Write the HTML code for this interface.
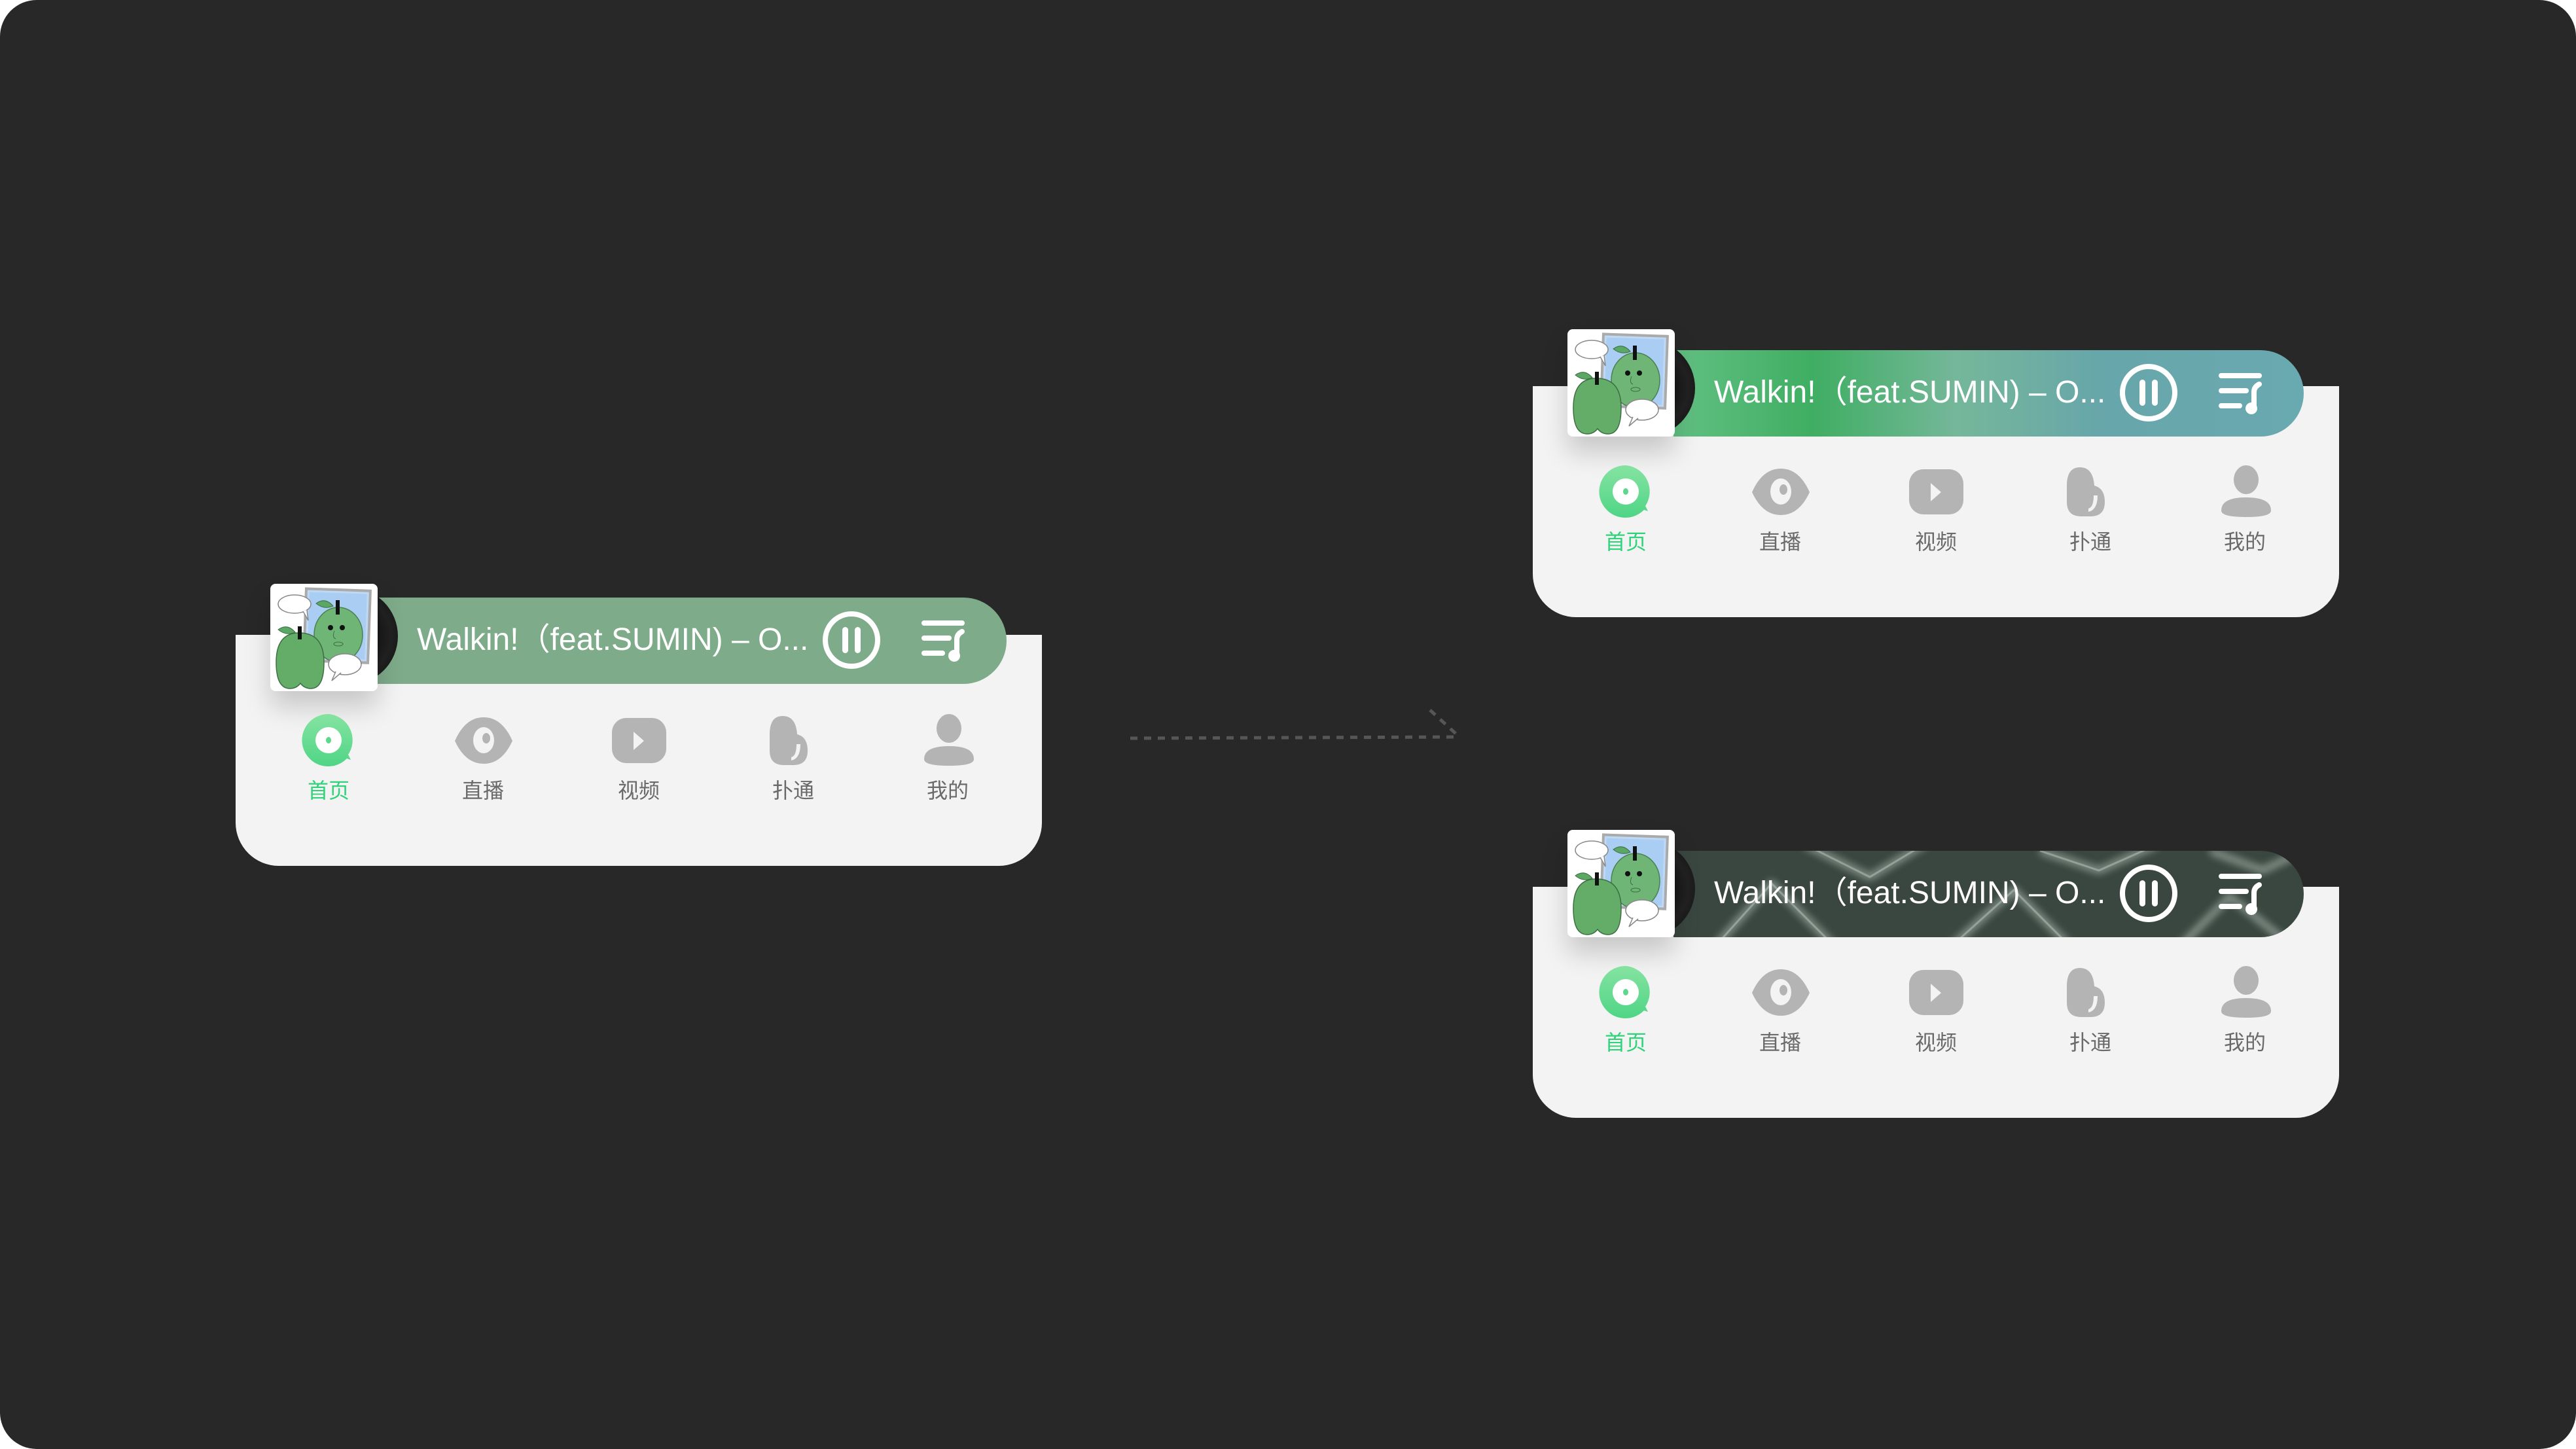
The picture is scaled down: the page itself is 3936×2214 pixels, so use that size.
<!DOCTYPE html>
<html><head><meta charset="utf-8"><style>
html,body{margin:0;padding:0;background:#fff;}
#bg{position:absolute;left:0;top:0;width:3936px;height:2214px;background:#282828;border-radius:56px;overflow:hidden;}
.card{position:absolute;width:1232px;height:431px;}
.panel{position:absolute;left:0;top:78px;width:1232px;height:353px;background:#f3f3f3;border-radius:0 0 66px 66px;}
.disc{position:absolute;left:100px;top:6px;width:148px;height:148px;border-radius:50%;background:radial-gradient(circle,#333 0,#111 30%,#222 60%,#0c0c0c 100%);}
.pill{position:absolute;left:215px;top:21px;width:963px;height:132px;border-radius:0 66px 66px 0;overflow:hidden;}
.album{position:absolute;left:53px;top:0;width:164px;height:164px;background:#fff;border-radius:8px;box-shadow:0 24px 40px rgba(0,0,0,0.18);overflow:hidden;}
.title{position:absolute;left:277px;top:60px;color:#fff;font:48px "Liberation Sans","Noto Sans CJK SC",sans-serif;white-space:nowrap;line-height:52px;letter-spacing:0px;}
.ctrl{position:absolute;left:0;top:0;}
.ico{position:absolute;}
.lbl{position:absolute;top:296px;width:160px;text-align:center;font:32px "Liberation Sans","Noto Sans CJK SC",sans-serif;color:#6a6a6a;line-height:40px;}
</style></head><body>
<div id="bg">

<svg style="position:absolute;left:0;top:0" width="3936" height="2214">
<g stroke="#565656" stroke-width="5" fill="none" stroke-dasharray="11 10">
<line x1="1727" y1="1128" x2="2230" y2="1126"/>
<line x1="2185" y1="1085" x2="2230" y2="1126"/>
</g></svg>

<div class="card" style="left:360px;top:892px;">
 <div class="panel"></div>
 <div class="pill" style="background:#7eab8a;"></div>
 <div class="disc"></div>
 <div class="album"><svg width="164" height="164" viewBox="0 0 164 164">
  <g transform="rotate(2 100 64)"><rect x="53" y="9" width="98" height="110" fill="#bfd9f5" stroke="#aaa" stroke-width="4"/><rect x="58" y="14" width="88" height="100" fill="#a9cdf3"/></g>
  <ellipse cx="104" cy="78" rx="37" ry="42" fill="#6fb676" stroke="#4a7f50" stroke-width="1.5"/>
  <path d="M70 30 q14 -10 26 4 q-14 6 -26 -4z" fill="#5ba866" stroke="#3d6e44"/>
  <rect x="100" y="25" width="6" height="22" fill="#111"/>
  <circle cx="92" cy="67" r="4" fill="#111"/><circle cx="110" cy="67" r="4" fill="#111"/>
  <path d="M98 72 q-4 10 2 12" stroke="#3d6e44" fill="none"/><ellipse cx="104" cy="92" rx="7" ry="3" fill="none" stroke="#3d6e44"/>
  <ellipse cx="37" cy="31" rx="25" ry="14" fill="#fff" stroke="#888" stroke-width="1.5"/>
  <path d="M50 42 l8 14 l-2 -16" fill="#fff" stroke="#888" stroke-width="1.5"/>
  <path d="M9 120 q0 -45 35 -45 q38 0 38 45 q0 40 -20 40 q-10 0 -16 -8 q-6 8 -16 8 q-21 0 -21 -40z" fill="#64ad68" stroke="#3d6e44" stroke-width="1.5"/>
  <path d="M12 70 q14 -10 26 4 q-14 6 -26 -4z" fill="#5ba866" stroke="#3d6e44"/>
  <rect x="42" y="65" width="6" height="20" fill="#111"/>
  <ellipse cx="114" cy="123" rx="25" ry="16" fill="#fff" stroke="#888" stroke-width="1.5"/>
  <path d="M100 134 l-6 14 l14 -12" fill="#fff" stroke="#888" stroke-width="1.5"/>
 </svg></div>
 <div class="title">Walkin!（feat.SUMIN) – O...</div>
 <svg class="ctrl" width="1232" height="200">
  <circle cx="941" cy="86" r="40" fill="none" stroke="#fff" stroke-width="8"/>
  <rect x="927" y="66" width="9" height="40" rx="4.5" fill="#fff"/><rect x="946" y="66" width="9" height="40" rx="4.5" fill="#fff"/>
  <g stroke="#fff" stroke-width="8" stroke-linecap="round" fill="none"><line x1="1052" y1="60" x2="1110" y2="60"/><line x1="1052" y1="83" x2="1090" y2="83"/><line x1="1052" y1="106" x2="1080" y2="106"/><path d="M1102 110 V85 q0-8 8-12"/></g>
  <circle cx="1098" cy="110" r="9" fill="#fff"/>
 </svg>
 <svg class="ico" style="left:0;top:190px" width="1232" height="100">
  <defs><linearGradient id="hg1" x1="0" y1="0" x2="0" y2="1"><stop offset="0" stop-color="#86e3a2"/><stop offset="1" stop-color="#4fd585"/></linearGradient></defs>
  <path d="M142 9 a40 40 0 1 0 28 68 l6 2 l-4 -8 a40 40 0 0 0 -30 -62z" fill="url(#hg1)"/>
  <ellipse cx="142" cy="49" rx="20" ry="20" fill="#fff"/><ellipse cx="142" cy="49" rx="4" ry="5" fill="#5cd88c"/>
  <path d="M379 14 q-28 0 -44 36 q16 35 44 35 q28 0 44 -35 q-16 -36 -44 -36z" fill="#b4b4b4"/>
  <ellipse cx="379" cy="49" rx="16" ry="20" fill="#f3f3f3"/><ellipse cx="383" cy="46" rx="6" ry="8" fill="#b4b4b4"/>
  <rect x="575" y="15" width="83" height="69" rx="22" fill="#b4b4b4"/><path d="M608 36 l16 14 l-16 14z" fill="#f3f3f3"/>
  <path d="M816 40 q0 -28 20 -28 q20 0 22 28 q16 4 16 25 q0 22 -22 22 h-14 q-22 0 -22 -22z" fill="#b4b4b4"/>
  <path d="M863 55 q0 22 -14 25 v-5 q8 -2 8 -20z" fill="#f3f3f3"/>
  <ellipse cx="1090" cy="31" rx="19" ry="22" fill="#b4b4b4"/>
  <path d="M1052 78 q0 -20 38 -20 q38 0 38 20 q0 10 -38 10 q-38 0 -38 -10z" fill="#b4b4b4"/>
 </svg>
 <div class="lbl" style="left:62px;color:#2fd37a">首页</div>
 <div class="lbl" style="left:298px">直播</div>
 <div class="lbl" style="left:536px">视频</div>
 <div class="lbl" style="left:772px">扑通</div>
 <div class="lbl" style="left:1008px">我的</div>
</div>

<div class="card" style="left:2342px;top:503px;">
 <div class="panel" style="top:87px;height:353px"></div>
 <div class="pill" style="top:32px;background:linear-gradient(90deg,#62c083 0%,#3fae62 22%,#75b79a 45%,#67a6aa 68%,#69a9b0 100%);"></div>
 <div class="disc" style="top:16px"></div>
 <div class="album"><svg width="164" height="164" viewBox="0 0 164 164">
  <g transform="rotate(2 100 64)"><rect x="53" y="9" width="98" height="110" fill="#bfd9f5" stroke="#aaa" stroke-width="4"/><rect x="58" y="14" width="88" height="100" fill="#a9cdf3"/></g>
  <ellipse cx="104" cy="78" rx="37" ry="42" fill="#6fb676" stroke="#4a7f50" stroke-width="1.5"/>
  <path d="M70 30 q14 -10 26 4 q-14 6 -26 -4z" fill="#5ba866" stroke="#3d6e44"/>
  <rect x="100" y="25" width="6" height="22" fill="#111"/>
  <circle cx="92" cy="67" r="4" fill="#111"/><circle cx="110" cy="67" r="4" fill="#111"/>
  <path d="M98 72 q-4 10 2 12" stroke="#3d6e44" fill="none"/><ellipse cx="104" cy="92" rx="7" ry="3" fill="none" stroke="#3d6e44"/>
  <ellipse cx="37" cy="31" rx="25" ry="14" fill="#fff" stroke="#888" stroke-width="1.5"/>
  <path d="M50 42 l8 14 l-2 -16" fill="#fff" stroke="#888" stroke-width="1.5"/>
  <path d="M9 120 q0 -45 35 -45 q38 0 38 45 q0 40 -20 40 q-10 0 -16 -8 q-6 8 -16 8 q-21 0 -21 -40z" fill="#64ad68" stroke="#3d6e44" stroke-width="1.5"/>
  <path d="M12 70 q14 -10 26 4 q-14 6 -26 -4z" fill="#5ba866" stroke="#3d6e44"/>
  <rect x="42" y="65" width="6" height="20" fill="#111"/>
  <ellipse cx="114" cy="123" rx="25" ry="16" fill="#fff" stroke="#888" stroke-width="1.5"/>
  <path d="M100 134 l-6 14 l14 -12" fill="#fff" stroke="#888" stroke-width="1.5"/>
 </svg></div>
 <div class="title" style="top:71px">Walkin!（feat.SUMIN) – O...</div>
 <svg class="ctrl" style="top:11px" width="1232" height="200">
  <circle cx="941" cy="86" r="40" fill="none" stroke="#fff" stroke-width="8"/>
  <rect x="927" y="66" width="9" height="40" rx="4.5" fill="#fff"/><rect x="946" y="66" width="9" height="40" rx="4.5" fill="#fff"/>
  <g stroke="#fff" stroke-width="8" stroke-linecap="round" fill="none"><line x1="1052" y1="60" x2="1110" y2="60"/><line x1="1052" y1="83" x2="1090" y2="83"/><line x1="1052" y1="106" x2="1080" y2="106"/><path d="M1102 110 V85 q0-8 8-12"/></g>
  <circle cx="1098" cy="110" r="9" fill="#fff"/>
 </svg>
 <svg class="ico" style="left:0;top:199px" width="1232" height="100">
  <defs><linearGradient id="hg2" x1="0" y1="0" x2="0" y2="1"><stop offset="0" stop-color="#86e3a2"/><stop offset="1" stop-color="#4fd585"/></linearGradient></defs>
  <path d="M142 9 a40 40 0 1 0 28 68 l6 2 l-4 -8 a40 40 0 0 0 -30 -62z" fill="url(#hg2)"/>
  <ellipse cx="142" cy="49" rx="20" ry="20" fill="#fff"/><ellipse cx="142" cy="49" rx="4" ry="5" fill="#5cd88c"/>
  <path d="M379 14 q-28 0 -44 36 q16 35 44 35 q28 0 44 -35 q-16 -36 -44 -36z" fill="#b4b4b4"/>
  <ellipse cx="379" cy="49" rx="16" ry="20" fill="#f3f3f3"/><ellipse cx="383" cy="46" rx="6" ry="8" fill="#b4b4b4"/>
  <rect x="575" y="15" width="83" height="69" rx="22" fill="#b4b4b4"/><path d="M608 36 l16 14 l-16 14z" fill="#f3f3f3"/>
  <path d="M816 40 q0 -28 20 -28 q20 0 22 28 q16 4 16 25 q0 22 -22 22 h-14 q-22 0 -22 -22z" fill="#b4b4b4"/>
  <path d="M863 55 q0 22 -14 25 v-5 q8 -2 8 -20z" fill="#f3f3f3"/>
  <ellipse cx="1090" cy="31" rx="19" ry="22" fill="#b4b4b4"/>
  <path d="M1052 78 q0 -20 38 -20 q38 0 38 20 q0 10 -38 10 q-38 0 -38 -10z" fill="#b4b4b4"/>
 </svg>
 <div class="lbl" style="top:305px;left:62px;color:#2fd37a">首页</div>
 <div class="lbl" style="top:305px;left:298px">直播</div>
 <div class="lbl" style="top:305px;left:536px">视频</div>
 <div class="lbl" style="top:305px;left:772px">扑通</div>
 <div class="lbl" style="top:305px;left:1008px">我的</div>
</div>

<div class="card" style="left:2342px;top:1268px;">
 <div class="panel" style="top:87px;height:353px"></div>
 <div class="pill" style="top:32px;background:#3a4640;">
  <svg width="963" height="132" style="position:absolute;left:0;top:0">
   <defs><filter id="bl"><feGaussianBlur stdDeviation="6"/></filter></defs>
   <g stroke="#b4c4ba" stroke-width="9" fill="none" filter="url(#bl)" opacity="0.75">
    <path d="M60 150 L150 50 L250 150"/><path d="M200 -10 L300 40 L400 -20"/><path d="M420 150 L520 60 L610 150"/><path d="M560 0 L650 30 L740 -10"/><path d="M770 150 L850 70 L963 160"/><path d="M820 0 L900 30 L963 0"/>
   </g>
   <g stroke="#dfe8e2" stroke-width="3" fill="none" opacity="0.35">
    <path d="M60 150 L150 50 L250 150"/><path d="M420 150 L520 60 L610 150"/><path d="M200 -10 L300 40 L400 -20"/><path d="M560 0 L650 30 L740 -10"/>
   </g>
  </svg>
 </div>
 <div class="disc" style="top:16px"></div>
 <div class="album"><svg width="164" height="164" viewBox="0 0 164 164">
  <g transform="rotate(2 100 64)"><rect x="53" y="9" width="98" height="110" fill="#bfd9f5" stroke="#aaa" stroke-width="4"/><rect x="58" y="14" width="88" height="100" fill="#a9cdf3"/></g>
  <ellipse cx="104" cy="78" rx="37" ry="42" fill="#6fb676" stroke="#4a7f50" stroke-width="1.5"/>
  <path d="M70 30 q14 -10 26 4 q-14 6 -26 -4z" fill="#5ba866" stroke="#3d6e44"/>
  <rect x="100" y="25" width="6" height="22" fill="#111"/>
  <circle cx="92" cy="67" r="4" fill="#111"/><circle cx="110" cy="67" r="4" fill="#111"/>
  <path d="M98 72 q-4 10 2 12" stroke="#3d6e44" fill="none"/><ellipse cx="104" cy="92" rx="7" ry="3" fill="none" stroke="#3d6e44"/>
  <ellipse cx="37" cy="31" rx="25" ry="14" fill="#fff" stroke="#888" stroke-width="1.5"/>
  <path d="M50 42 l8 14 l-2 -16" fill="#fff" stroke="#888" stroke-width="1.5"/>
  <path d="M9 120 q0 -45 35 -45 q38 0 38 45 q0 40 -20 40 q-10 0 -16 -8 q-6 8 -16 8 q-21 0 -21 -40z" fill="#64ad68" stroke="#3d6e44" stroke-width="1.5"/>
  <path d="M12 70 q14 -10 26 4 q-14 6 -26 -4z" fill="#5ba866" stroke="#3d6e44"/>
  <rect x="42" y="65" width="6" height="20" fill="#111"/>
  <ellipse cx="114" cy="123" rx="25" ry="16" fill="#fff" stroke="#888" stroke-width="1.5"/>
  <path d="M100 134 l-6 14 l14 -12" fill="#fff" stroke="#888" stroke-width="1.5"/>
 </svg></div>
 <div class="title" style="top:71px">Walkin!（feat.SUMIN) – O...</div>
 <svg class="ctrl" style="top:11px" width="1232" height="200">
  <circle cx="941" cy="86" r="40" fill="none" stroke="#fff" stroke-width="8"/>
  <rect x="927" y="66" width="9" height="40" rx="4.5" fill="#fff"/><rect x="946" y="66" width="9" height="40" rx="4.5" fill="#fff"/>
  <g stroke="#fff" stroke-width="8" stroke-linecap="round" fill="none"><line x1="1052" y1="60" x2="1110" y2="60"/><line x1="1052" y1="83" x2="1090" y2="83"/><line x1="1052" y1="106" x2="1080" y2="106"/><path d="M1102 110 V85 q0-8 8-12"/></g>
  <circle cx="1098" cy="110" r="9" fill="#fff"/>
 </svg>
 <svg class="ico" style="left:0;top:199px" width="1232" height="100">
  <defs><linearGradient id="hg3" x1="0" y1="0" x2="0" y2="1"><stop offset="0" stop-color="#86e3a2"/><stop offset="1" stop-color="#4fd585"/></linearGradient></defs>
  <path d="M142 9 a40 40 0 1 0 28 68 l6 2 l-4 -8 a40 40 0 0 0 -30 -62z" fill="url(#hg3)"/>
  <ellipse cx="142" cy="49" rx="20" ry="20" fill="#fff"/><ellipse cx="142" cy="49" rx="4" ry="5" fill="#5cd88c"/>
  <path d="M379 14 q-28 0 -44 36 q16 35 44 35 q28 0 44 -35 q-16 -36 -44 -36z" fill="#b4b4b4"/>
  <ellipse cx="379" cy="49" rx="16" ry="20" fill="#f3f3f3"/><ellipse cx="383" cy="46" rx="6" ry="8" fill="#b4b4b4"/>
  <rect x="575" y="15" width="83" height="69" rx="22" fill="#b4b4b4"/><path d="M608 36 l16 14 l-16 14z" fill="#f3f3f3"/>
  <path d="M816 40 q0 -28 20 -28 q20 0 22 28 q16 4 16 25 q0 22 -22 22 h-14 q-22 0 -22 -22z" fill="#b4b4b4"/>
  <path d="M863 55 q0 22 -14 25 v-5 q8 -2 8 -20z" fill="#f3f3f3"/>
  <ellipse cx="1090" cy="31" rx="19" ry="22" fill="#b4b4b4"/>
  <path d="M1052 78 q0 -20 38 -20 q38 0 38 20 q0 10 -38 10 q-38 0 -38 -10z" fill="#b4b4b4"/>
 </svg>
 <div class="lbl" style="top:305px;left:62px;color:#2fd37a">首页</div>
 <div class="lbl" style="top:305px;left:298px">直播</div>
 <div class="lbl" style="top:305px;left:536px">视频</div>
 <div class="lbl" style="top:305px;left:772px">扑通</div>
 <div class="lbl" style="top:305px;left:1008px">我的</div>
</div>

</div>
</body></html>
